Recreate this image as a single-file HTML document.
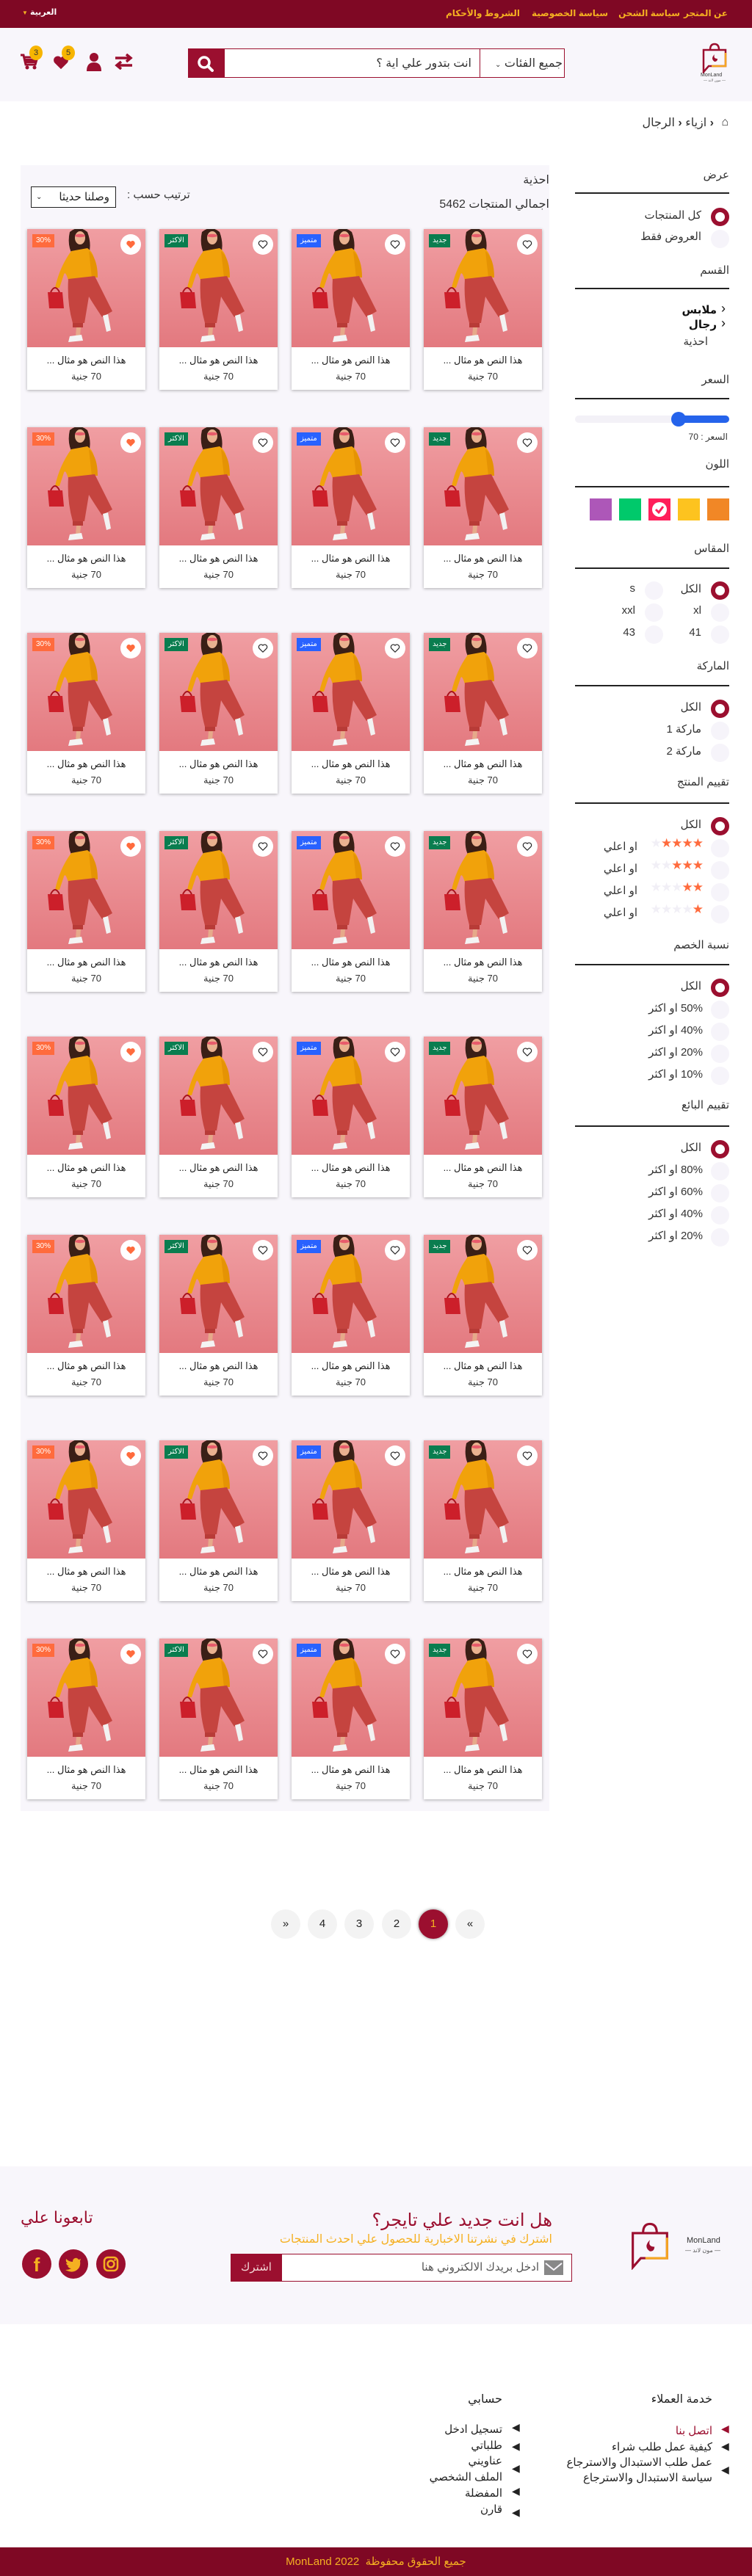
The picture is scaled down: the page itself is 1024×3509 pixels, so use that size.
<!DOCTYPE html>
<html lang="ar" dir="rtl"><head><meta charset="utf-8">
<style>
*{box-sizing:border-box;margin:0;padding:0}
body{width:1024px;height:3509px;position:relative;background:#fff;font-family:"Liberation Sans","DejaVu Sans",sans-serif;color:#222;overflow:hidden}
.a{position:absolute}
.t{position:absolute;white-space:nowrap}
.r{text-align:right}
.card{position:absolute;width:161px;height:219px;background:#fff;box-shadow:0 1px 4px rgba(0,0,0,.3)}
.card svg{display:block;width:161px;height:161px}
.card .n{position:absolute;top:171px;width:100%;text-align:center;font-size:13px;color:#222}
.card .p{position:absolute;top:193px;width:100%;text-align:center;font-size:13px;color:#333}
.bd{position:absolute;top:7px;left:7px;height:18px;padding:0 5px;font-size:10px;line-height:18px;color:#fff}
.hr{position:absolute;top:7px;right:6px;width:28px;height:28px;border-radius:50%;background:#fff}
.hr svg{width:14px;height:14px;margin:7px}
.rad{position:absolute;width:25px;height:25px;border-radius:50%;background:#f6f4fa}
.rad.on{background:#fff;border:6px solid #9b0f2f}
.line{position:absolute;left:783px;width:210px;height:2px;background:#222}
.sh{position:absolute;right:31px;font-size:15px;color:#333}
.lb{position:absolute;font-size:15px;color:#333;white-space:nowrap;text-align:right}
.pg{position:absolute;top:2601px;width:40px;height:40px;border-radius:50%;background:#f3f3f3;text-align:center;line-height:40px;font-size:15px;color:#222}
.fl{position:absolute;font-size:15px;color:#222;white-space:nowrap}
</style></head><body>
<svg width="0" height="0" style="position:absolute">
<defs>
<linearGradient id="bg" x1="0" y1="0" x2="0" y2="1"><stop offset="0" stop-color="#f09ea2"/><stop offset="1" stop-color="#e3797f"/></linearGradient>
<symbol id="prod" viewBox="0 0 161 161">
<rect width="161" height="161" fill="url(#bg)"/>
<path d="M58 4 Q70 -6 82 4 Q88 20 84 34 L62 36 Q54 22 58 4Z" fill="#3a1f16"/>
<ellipse cx="72" cy="12" rx="7" ry="9" fill="#e9b18f"/>
<ellipse cx="72" cy="9" rx="7" ry="2.2" fill="#e85b6b"/>
<path d="M60 30 L82 26 Q94 34 92 56 L90 70 L76 72 L68 73 L56 70 Q52 56 50 62 L44 80 L38 80 Q44 52 60 30Z" fill="#f1a20b"/>
<path d="M84 30 Q96 40 96 66 L88 66Z" fill="#e59304"/>
<path d="M56 68 L92 64 Q104 88 116 112 L102 120 Q90 102 84 92 L78 128 L62 128 Q54 100 56 68Z" fill="#c5443f"/>
<path d="M62 128 L76 128 L76 134 L62 134Z" fill="#b83b37"/>
<path d="M67 134 L73 134 L72 146 L66 146Z" fill="#e6a98a"/>
<path d="M58 146 L74 144 L76 152 L56 154Z" fill="#f4f4f4"/>
<path d="M103 118 L110 116 L114 138 L108 140Z" fill="#f2f2f2"/>
<path d="M28 86 L48 86 L50 108 L30 108Z" fill="#cc1f2a"/>
<path d="M32 86 Q38 74 44 86" stroke="#a8121c" stroke-width="2" fill="none"/>
</symbol>
<symbol id="hO" viewBox="0 0 24 24"><path d="M12 21 L3.5 12.5 A5 5 0 0 1 12 5.5 A5 5 0 0 1 20.5 12.5Z" fill="none" stroke="#222" stroke-width="2" stroke-linejoin="round"/></symbol>
<symbol id="hF" viewBox="0 0 24 24"><path d="M12 21 L3.5 12.5 A5 5 0 0 1 12 5.5 A5 5 0 0 1 20.5 12.5Z" fill="#ff6b3d"/></symbol>
</defs></svg>

<div class="a" style="left:0;top:0;width:1024px;height:38px;background:#7f0824"></div>
<div class="t" style="right:33px;top:11px;font-size:12px;font-weight:bold;color:#f5b021">عن المتجر</div>
<div class="t" style="right:98px;top:11px;font-size:12px;font-weight:bold;color:#f5b021">سياسة الشحن</div>
<div class="t" style="right:196px;top:11px;font-size:12px;font-weight:bold;color:#f5b021">سياسة الخصوصية</div>
<div class="t" style="right:316px;top:11px;font-size:12px;font-weight:bold;color:#f5b021">الشروط والأحكام</div>
<div class="t" style="left:30px;top:10px;font-size:11px;font-weight:bold;color:#fff">العربية <span style="color:#f5b021;font-size:8px">▼</span></div>

<div class="a" style="left:0;top:38px;width:1024px;height:100px;background:#f8f6fb"></div>
<svg class="a" style="left:955px;top:58px" width="36" height="42" viewBox="0 0 36 42"><path d="M12 10 Q12 2 18 2 Q24 2 24 10" fill="none" stroke="#9b0f2f" stroke-width="2.5"/><path d="M3 10 L33 10 L33 32 L10 32 L3 40Z" fill="none" stroke="#9b0f2f" stroke-width="2.5"/><path d="M33 14 L33 32 L14 32" fill="none" stroke="#f5a623" stroke-width="2.5"/><path d="M18 16 Q12 22 18 26 Q22 26 22 22 Q16 22 18 16Z" fill="#9b0f2f"/></svg>
<div class="t" style="left:954px;top:99px;font-size:7px;color:#333">MonLand</div>
<div class="t" style="left:958px;top:107px;font-size:5px;color:#666">— مون لاند —</div>
<div class="a" style="left:256px;top:66px;width:513px;height:40px;border:1px solid #9b0f2f;background:#fff"></div>
<div class="a" style="left:256px;top:66px;width:50px;height:40px;background:#9b0f2f"></div>
<svg class="a" style="left:268px;top:75px" width="24" height="24" viewBox="0 0 24 24"><circle cx="10" cy="10" r="7" fill="none" stroke="#fff" stroke-width="3.5"/><path d="M15 15 L21 21" stroke="#fff" stroke-width="4" stroke-linecap="round"/></svg>
<div class="a" style="left:653px;top:66px;width:1px;height:40px;background:#9b0f2f"></div>
<div class="t" style="right:258px;top:76px;font-size:16px;color:#333">جميع الفئات <span style="font-size:10px">⌄</span></div>
<div class="t" style="right:382px;top:76px;font-size:16px;color:#333">انت بتدور علي اية ؟</div>
<svg class="a" style="left:27px;top:72px" width="26" height="24" viewBox="0 0 26 24"><path d="M1 3 L5 3 L8 16 L21 16 L24 6 L7 6" fill="none" stroke="#9b0f2f" stroke-width="3"/><rect x="7" y="8" width="15" height="6" fill="#9b0f2f"/><circle cx="10" cy="20" r="2.5" fill="#9b0f2f"/><circle cx="20" cy="20" r="2.5" fill="#9b0f2f"/></svg>
<div class="a" style="left:40px;top:62px;width:18px;height:20px;border-radius:50%;background:#f7b500;font-size:11px;text-align:center;line-height:20px;color:#333">3</div>
<svg class="a" style="left:72px;top:74px" width="22" height="22" viewBox="0 0 24 24"><path d="M12 22 L2.5 12.5 A5.5 5.5 0 0 1 12 5 A5.5 5.5 0 0 1 21.5 12.5Z" fill="#9b0f2f"/></svg>
<div class="a" style="left:84px;top:62px;width:18px;height:20px;border-radius:50%;background:#f7b500;font-size:11px;text-align:center;line-height:20px;color:#333">5</div>
<svg class="a" style="left:117px;top:71px" width="22" height="26" viewBox="0 0 22 26"><circle cx="11" cy="7" r="6" fill="#9b0f2f"/><path d="M1 26 Q1 14 11 14 Q21 14 21 26Z" fill="#9b0f2f"/></svg>
<svg class="a" style="left:155px;top:73px" width="27" height="22" viewBox="0 0 27 22"><path d="M2 6 L22 6 M17 1 L23 6 L17 11" fill="none" stroke="#9b0f2f" stroke-width="3.5"/><path d="M25 16 L5 16 M10 11 L4 16 L10 21" fill="none" stroke="#9b0f2f" stroke-width="3.5"/></svg>

<div class="t" style="right:32px;top:158px;font-size:16px;color:#333">⌂</div>
<div class="t" style="right:52px;top:157px;font-size:16px;color:#333"><b>‹</b> ازياء <b>‹</b> الرجال</div>

<div class="a" style="left:28px;top:225px;width:720px;height:2242px;background:#f8f6fb"></div>
<div class="t" style="right:276px;top:235px;font-size:16px;color:#333">احذية</div>
<div class="t" style="right:276px;top:268px;font-size:16px;color:#333">اجمالي المنتجات 5462</div>
<div class="t" style="left:173px;top:256px;font-size:15px;color:#333">ترتيب حسب :</div>
<div class="a" style="left:42px;top:254px;width:116px;height:29px;border:1px solid #222;background:#fff;font-size:15px;line-height:27px;padding-right:8px;color:#222">وصلنا حديثا <span style="font-size:10px;position:absolute;left:6px">⌄</span></div>

<div id="cards"></div>
<script>
(function(){
var tops=[312,582,862,1132,1412,1682,1962,2232],lefts=[577,397,217,37];
var bd=[['جديد','#0a7d4f'],['متميز','#2962ff'],['الاكثر','#0a7d4f'],['30%','#ff6b3d']];
var h='';
tops.forEach(function(t){lefts.forEach(function(l,i){
h+='<div class="card" style="left:'+l+'px;top:'+t+'px"><svg viewBox="0 0 161 161"><use href="#prod"/></svg>'+
'<div class="bd" style="background:'+bd[i][1]+'">'+bd[i][0]+'</div>'+
'<div class="hr"><svg viewBox="0 0 24 24"><use href="#'+(i==3?'hF':'hO')+'"/></svg></div>'+
'<div class="n">هذا النص هو مثال ...</div><div class="p">70 جنية</div></div>';});});
document.getElementById('cards').innerHTML=h;})();
</script>

<div class="sh" style="top:229px">عرض</div><div class="line" style="top:262px"></div>
<div class="rad on" style="left:968px;top:283px"></div><div class="lb" style="right:69px;top:284px">كل المنتجات</div>
<div class="rad" style="left:968px;top:313px"></div><div class="lb" style="right:69px;top:313px">العروض فقط</div>
<div class="sh" style="top:359px">القسم</div><div class="line" style="top:392px"></div>
<div class="lb" style="right:48px;top:413px;font-weight:bold;color:#111">ملابس</div>
<div class="lb" style="right:48px;top:433px;font-weight:bold;color:#111">رجال</div>
<div class="t" style="left:982px;top:410px;font-size:18px;color:#111">‹</div>
<div class="t" style="left:982px;top:430px;font-size:18px;color:#111">‹</div>
<div class="lb" style="right:60px;top:456px">احذية</div>
<div class="sh" style="top:508px">السعر</div><div class="line" style="top:542px"></div>
<div class="a" style="left:783px;top:566px;width:210px;height:10px;border-radius:5px;background:#f3f1f7"></div>
<div class="a" style="left:925px;top:566px;width:68px;height:10px;border-radius:5px;background:#2563eb"></div>
<div class="a" style="left:914px;top:561px;width:20px;height:20px;border-radius:50%;background:#2563eb"></div>
<div class="lb" style="right:33px;top:588px;font-size:12px">السعر : 70</div>
<div class="sh" style="top:623px">اللون</div><div class="line" style="top:662px"></div>
<div class="a" style="left:803px;top:679px;width:30px;height:30px;background:#ad57b8"></div>
<div class="a" style="left:843px;top:679px;width:30px;height:30px;background:#00c96b"></div>
<div class="a" style="left:883px;top:679px;width:30px;height:30px;background:#ff1f5a"><svg width="30" height="30" viewBox="0 0 30 30"><circle cx="15" cy="15" r="10" fill="#fff"/><path d="M10 15 L14 19 L20 11" fill="none" stroke="#ff1f5a" stroke-width="3"/></svg></div>
<div class="a" style="left:923px;top:679px;width:30px;height:30px;background:#fdc31f"></div>
<div class="a" style="left:963px;top:679px;width:30px;height:30px;background:#f18726"></div>

<div class="sh" style="top:738px">المقاس</div><div class="line" style="top:773px"></div>
<div class="rad on" style="left:968px;top:792px"></div><div class="lb" style="right:69px;top:793px">الكل</div>
<div class="rad" style="left:878px;top:792px"></div><div class="lb" style="right:159px;top:793px">s</div>
<div class="rad" style="left:968px;top:822px"></div><div class="lb" style="right:69px;top:823px">xl</div>
<div class="rad" style="left:878px;top:822px"></div><div class="lb" style="right:159px;top:823px">xxl</div>
<div class="rad" style="left:968px;top:852px"></div><div class="lb" style="right:69px;top:853px">41</div>
<div class="rad" style="left:878px;top:852px"></div><div class="lb" style="right:159px;top:853px">43</div>

<div class="sh" style="top:898px">الماركة</div><div class="line" style="top:933px"></div>
<div class="rad on" style="left:968px;top:953px"></div><div class="lb" style="right:69px;top:954px">الكل</div>
<div class="rad" style="left:968px;top:983px"></div><div class="lb" style="right:69px;top:984px">ماركة 1</div>
<div class="rad" style="left:968px;top:1013px"></div><div class="lb" style="right:69px;top:1014px">ماركة 2</div>

<div class="sh" style="top:1056px">تقييم المنتج</div><div class="line" style="top:1093px"></div>
<div class="rad on" style="left:968px;top:1113px"></div><div class="lb" style="right:69px;top:1114px">الكل</div>
<div class="rad" style="left:968px;top:1143px"></div><div class="lb" style="right:67px;top:1139px;font-size:17px;letter-spacing:-1px"><span style="color:#ff6b3d">★★★★</span><span style="color:#f1eff6">★</span></div><div class="lb" style="right:156px;top:1144px">او اعلي</div>
<div class="rad" style="left:968px;top:1173px"></div><div class="lb" style="right:67px;top:1169px;font-size:17px;letter-spacing:-1px"><span style="color:#ff6b3d">★★★</span><span style="color:#f1eff6">★★</span></div><div class="lb" style="right:156px;top:1174px">او اعلي</div>
<div class="rad" style="left:968px;top:1203px"></div><div class="lb" style="right:67px;top:1199px;font-size:17px;letter-spacing:-1px"><span style="color:#ff6b3d">★★</span><span style="color:#f1eff6">★★★</span></div><div class="lb" style="right:156px;top:1204px">او اعلي</div>
<div class="rad" style="left:968px;top:1233px"></div><div class="lb" style="right:67px;top:1229px;font-size:17px;letter-spacing:-1px"><span style="color:#ff6b3d">★</span><span style="color:#f1eff6">★★★★</span></div><div class="lb" style="right:156px;top:1234px">او اعلي</div>

<div class="sh" style="top:1278px">نسبة الخصم</div><div class="line" style="top:1313px"></div>
<div class="rad on" style="left:968px;top:1333px"></div><div class="lb" style="right:69px;top:1334px">الكل</div>
<div class="rad" style="left:968px;top:1363px"></div><div class="lb" style="right:67px;top:1364px">50% او اكثر</div>
<div class="rad" style="left:968px;top:1393px"></div><div class="lb" style="right:67px;top:1394px">40% او اكثر</div>
<div class="rad" style="left:968px;top:1423px"></div><div class="lb" style="right:67px;top:1424px">20% او اكثر</div>
<div class="rad" style="left:968px;top:1453px"></div><div class="lb" style="right:67px;top:1454px">10% او اكثر</div>

<div class="sh" style="top:1496px">تقييم البائع</div><div class="line" style="top:1533px"></div>
<div class="rad on" style="left:968px;top:1553px"></div><div class="lb" style="right:69px;top:1554px">الكل</div>
<div class="rad" style="left:968px;top:1583px"></div><div class="lb" style="right:67px;top:1584px">80% او اكثر</div>
<div class="rad" style="left:968px;top:1613px"></div><div class="lb" style="right:67px;top:1614px">60% او اكثر</div>
<div class="rad" style="left:968px;top:1643px"></div><div class="lb" style="right:67px;top:1644px">40% او اكثر</div>
<div class="rad" style="left:968px;top:1673px"></div><div class="lb" style="right:67px;top:1674px">20% او اكثر</div>

<div class="pg" style="left:369px">«</div>
<div class="pg" style="left:419px">4</div>
<div class="pg" style="left:469px">3</div>
<div class="pg" style="left:520px">2</div>
<div class="pg" style="left:570px;background:#9b0f2f;color:#f5b021;box-shadow:0 0 4px rgba(0,0,0,.5)">1</div>
<div class="pg" style="left:620px">»</div>

<div class="a" style="left:0;top:2951px;width:1024px;height:215px;background:#f8f6fb"></div>
<svg class="a" style="left:857px;top:3026px" width="56" height="66" viewBox="0 0 36 42"><path d="M12 10 Q12 2 18 2 Q24 2 24 10" fill="none" stroke="#9b0f2f" stroke-width="2"/><path d="M3 10 L33 10 L33 32 L10 32 L3 40Z" fill="none" stroke="#9b0f2f" stroke-width="2"/><path d="M33 14 L33 32 L14 32" fill="none" stroke="#f5a623" stroke-width="2"/><path d="M18 16 Q12 22 18 26 Q22 26 22 22 Q16 22 18 16Z" fill="#9b0f2f"/></svg>
<div class="t" style="left:935px;top:3046px;font-size:11px;color:#333">MonLand</div>
<div class="t" style="left:933px;top:3061px;font-size:8px;color:#555">— مون لاند —</div>
<div class="t" style="right:272px;top:3010px;font-size:24px;color:#9b0f2f">هل انت جديد علي تايجر؟</div>
<div class="t" style="right:272px;top:3040px;font-size:16px;color:#f5b021">اشترك في نشرتنا الاخبارية للحصول علي احدث المنتجات</div>
<div class="a" style="left:314px;top:3070px;width:465px;height:38px;border:1px solid #9b0f2f;background:#fff"></div>
<div class="a" style="left:314px;top:3070px;width:70px;height:38px;background:#9b0f2f;color:#f3d7d7;font-size:15px;text-align:center;line-height:38px">اشترك</div>
<div class="a" style="left:741px;top:3079px;width:26px;height:20px;background:#888"></div>
<svg class="a" style="left:741px;top:3079px" width="26" height="20" viewBox="0 0 26 20"><path d="M2 4 L13 13 L24 4" fill="none" stroke="#f8f6fb" stroke-width="2"/></svg>
<div class="t" style="right:290px;top:3079px;font-size:15px;color:#555">ادخل بريدك الالكتروني هنا</div>
<div class="t" style="left:28px;top:3008px;font-size:22px;color:#9b0f2f">تابعونا علي</div>
<div class="a" style="left:30px;top:3064px;width:40px;height:40px;border-radius:50%;background:#9b0f2f;color:#f5b021;font-size:26px;font-weight:bold;text-align:center;line-height:42px">f</div>
<div class="a" style="left:80px;top:3064px;width:40px;height:40px;border-radius:50%;background:#9b0f2f"><svg width="40" height="40" viewBox="0 0 40 40"><path d="M30 13 Q28 14 27 14 Q25 11 22 12 Q19 13 19 17 Q14 17 10 13 Q9 17 12 19 L10 19 Q11 22 14 23 L12 23 Q14 26 17 26 Q14 28 9 28 Q20 34 27 26 Q30 22 29 16 Z" fill="#f5b021"/></svg></div>
<div class="a" style="left:131px;top:3064px;width:40px;height:40px;border-radius:50%;background:#9b0f2f"><svg width="40" height="40" viewBox="0 0 40 40"><rect x="11" y="11" width="18" height="18" rx="5" fill="none" stroke="#f5b021" stroke-width="2.5"/><circle cx="20" cy="20" r="4.5" fill="none" stroke="#f5b021" stroke-width="2.5"/><circle cx="25.5" cy="14.5" r="1.3" fill="#f5b021"/></svg></div>

<div class="fl" style="right:54px;top:3258px;font-size:16px">خدمة العملاء</div>
<div class="fl" style="right:340px;top:3258px;font-size:16px">حسابي</div>
<div class="fl" style="right:54px;top:3302px;color:#9b0f2f">اتصل بنا</div>
<div class="fl" style="right:54px;top:3324px">كيفية عمل طلب شراء</div>
<div class="fl" style="right:54px;top:3345px">عمل طلب الاستبدال والاسترجاع</div>
<div class="fl" style="right:54px;top:3366px">سياسة الاستبدال والاسترجاع</div>
<div class="t" style="left:982px;top:3300px;font-size:14px;color:#9b0f2f">◀</div>
<div class="t" style="left:982px;top:3324px;font-size:14px">◀</div>
<div class="t" style="left:982px;top:3356px;font-size:14px">◀</div>
<div class="fl" style="right:340px;top:3300px">تسجيل ادخل</div>
<div class="fl" style="right:340px;top:3322px">طلباتي</div>
<div class="fl" style="right:340px;top:3343px">عناويني</div>
<div class="fl" style="right:340px;top:3365px">الملف الشخصي</div>
<div class="fl" style="right:340px;top:3387px">المفضلة</div>
<div class="fl" style="right:340px;top:3409px">قارن</div>
<div class="t" style="left:697px;top:3298px;font-size:14px">◀</div>
<div class="t" style="left:697px;top:3324px;font-size:14px">◀</div>
<div class="t" style="left:697px;top:3354px;font-size:14px">◀</div>
<div class="t" style="left:697px;top:3385px;font-size:14px">◀</div>
<div class="t" style="left:697px;top:3414px;font-size:14px">◀</div>

<div class="a" style="left:0;top:3470px;width:1024px;height:39px;background:#7f0824"></div>
<div class="t" style="left:0;width:1024px;text-align:center;top:3480px;font-size:15px;color:#f5b021">جميع الحقوق محفوظة &nbsp;MonLand 2022</div>
</body></html>
